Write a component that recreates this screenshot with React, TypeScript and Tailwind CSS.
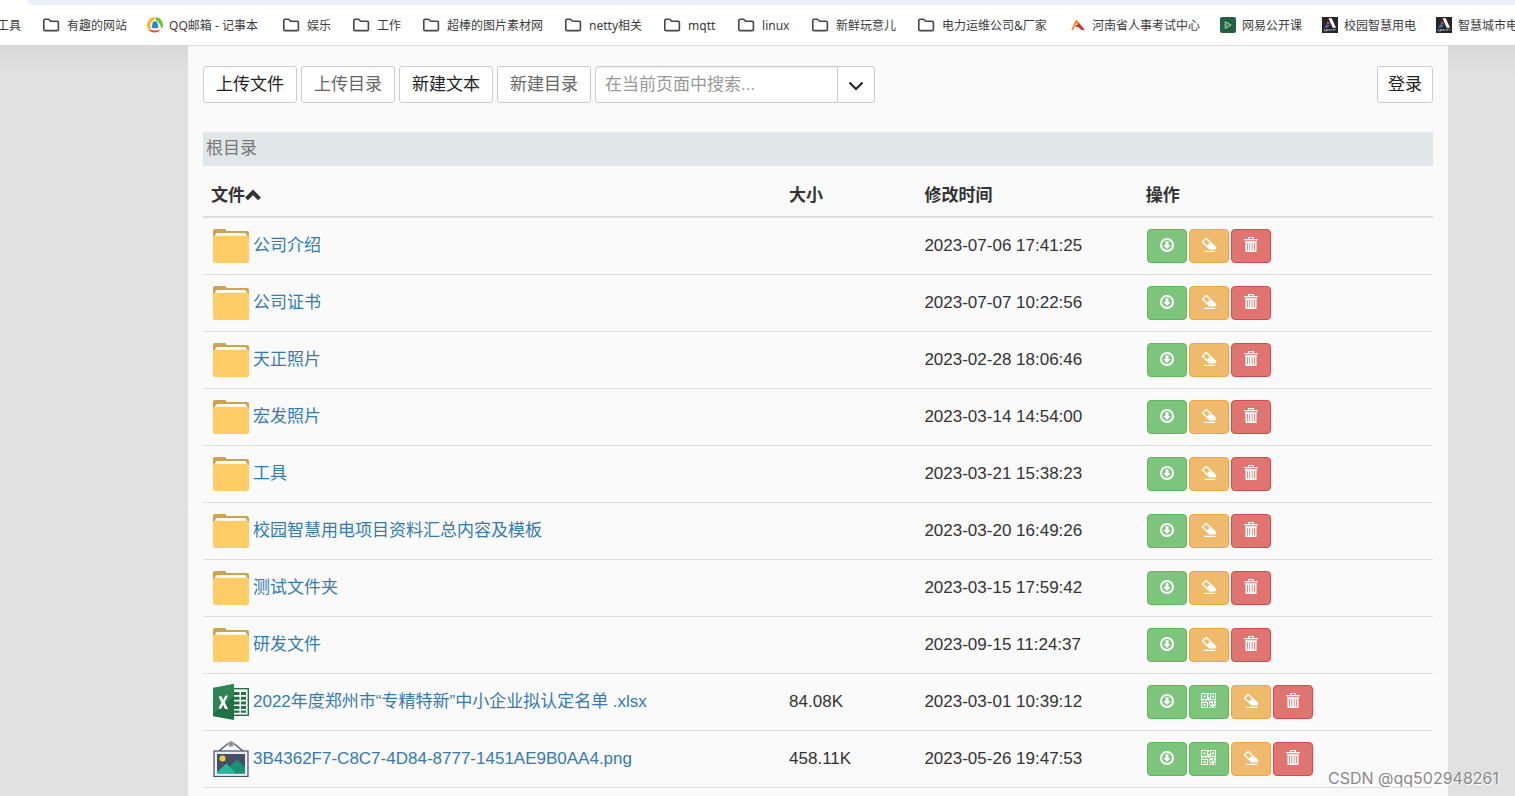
import type { ReactNode } from "react"
import clsx from "clsx"

type FileKind = "folder" | "excel" | "image"

type FileItem = {
    name: string
    kind: FileKind
    size?: string
    modified: string
}

type Bookmark = {
    label: string
    icon?: ReactNode
    width?: string
}

const files: FileItem[] = [
    { name: "公司介绍", kind: "folder", modified: "2023-07-06 17:41:25" },
    { name: "公司证书", kind: "folder", modified: "2023-07-07 10:22:56" },
    { name: "天正照片", kind: "folder", modified: "2023-02-28 18:06:46" },
    { name: "宏发照片", kind: "folder", modified: "2023-03-14 14:54:00" },
    { name: "工具", kind: "folder", modified: "2023-03-21 15:38:23" },
    { name: "校园智慧用电项目资料汇总内容及模板", kind: "folder", modified: "2023-03-20 16:49:26" },
    { name: "测试文件夹", kind: "folder", modified: "2023-03-15 17:59:42" },
    { name: "研发文件", kind: "folder", modified: "2023-09-15 11:24:37" },
    { name: "2022年度郑州市“专精特新”中小企业拟认定名单 .xlsx", kind: "excel", size: "84.08K", modified: "2023-03-01 10:39:12" },
    { name: "3B4362F7-C8C7-4D84-8777-1451AE9B0AA4.png", kind: "image", size: "458.11K", modified: "2023-05-26 19:47:53" },
]

function BookmarkFolderIcon() {
    return (
        <svg className="h-5 w-5 shrink-0" viewBox="0 0 20 20" fill="none" stroke="#474747" strokeWidth="1.6" strokeLinejoin="round">
            <path d="M2.8 5.4a1.2 1.2 0 0 1 1.2-1.2h3.6l2 2h6.6a1.2 1.2 0 0 1 1.2 1.2v7a1.2 1.2 0 0 1-1.2 1.2H4a1.2 1.2 0 0 1-1.2-1.2z" />
        </svg>
    )
}

function QQMailIcon() {
    return (
        <svg className="h-4 w-4 shrink-0" viewBox="0 0 16 16">
            <path d="M7.500 0A8 8 0 0 0 1.600 12.800L4 10.500A6 6 0 0 1 7.500 2.600z" fill="#fbb918" />
            <path d="M8.500 0a8 8 0 0 1 6.300 12C13.500 8 12 5 8.500 2.800z" fill="#6cc02b" />
            <path d="M2.200 12.200c3 1.400 7 1.600 11.300.6A8 8 0 0 1 2.200 13.400z" fill="#f0411c" />
            <path d="M8 4.200c1.800 0 2.800 1.400 2.800 3.200 0 1 .7 1.800.7 2.600 0 .9-1.600 1.200-3.500 1.200S4.800 11 4.800 10c0-.8.500-1.600.5-2.600C5.300 5.600 6.200 4.200 8 4.200z" fill="#1b8be0" />
        </svg>
    )
}

function ExamCenterIcon() {
    return (
        <svg className="h-4 w-4 shrink-0" viewBox="0 0 16 16">
            <path d="M1.200 13L5 4.200C5.600 2.800 7 2.600 7.800 4l2.400 4.500L8 8.200 6.200 6 3.400 13z" fill="#f4911e" />
            <path d="M5.500 8.500c2.500-1.800 5-.8 9 4.300h-2.700C9.500 10 7.500 9.300 5.500 9.800z" fill="#e32b35" />
            <path d="M8.500 5.200l6 7.600h-3.300L7.500 9z" fill="#e32b35" />
        </svg>
    )
}

function OpenCourseIcon() {
    return (
        <svg className="h-4 w-4 shrink-0" viewBox="0 0 16 16">
            <rect width="16" height="16" rx="2" fill="#23603f" />
            <path d="M5.200 4.500l6 3.500-6 3.500z" fill="#4a8465" stroke="#a9cbb9" strokeWidth="1" />
        </svg>
    )
}

function UnityIcon() {
    return (
        <svg className="h-4 w-4 shrink-0" viewBox="0 0 16 16">
            <rect width="16" height="16" fill="#25252a" />
            <path d="M6.500 1.200h3.200l4.300 9.600h-3.300z" fill="#fff" />
            <path d="M5.800 3.600L8 7 5.800 7.600 4.400 6.600z" fill="#d93a34" />
            <path d="M4 7.400l4 .7-2.300 2.500-3.400.3z" fill="#3d6fc0" />
            <path d="M2.500 12v2h2v-2M5.500 14v-2l2 2v-2M9 12v2M10.200 12.400h2M11.200 12v2M12.500 12l.8 1 .8-1" fill="none" stroke="#b9b9bd" strokeWidth=".7" />
        </svg>
    )
}

function FolderImage() {
    return (
        <svg className="h-9 w-9 shrink-0" viewBox="0 0 36 36">
            <path d="M0 3a2 2 0 0 1 2-2h10q1 0 1.500 2H34a2 2 0 0 1 2 2v6H0z" fill="#cda351" />
            <path d="M1.500 9l1-2.500Q3 5 4.500 5h27q1.500 0 2 1.500l1 2.500z" fill="#fff" />
            <path d="M0 9.500a2 2 0 0 1 2-1.700h32a2 2 0 0 1 2 1.700V33a2 2 0 0 1-2 2H2a2 2 0 0 1-2-2z" fill="#ffcc66" />
        </svg>
    )
}

function ExcelImage() {
    return (
        <svg className="h-9 w-9 shrink-0" viewBox="0 0 36 36">
            <rect x="18" y="4.700" width="17.300" height="26.600" fill="#fff" stroke="#207245" strokeWidth="1.400" />
            <path d="M21 8h5.500v3H21zM28 8h5v3h-5zM21 12.700h5.500v3H21zM28 12.700h5v3h-5zM21 17.400h5.500v3H21zM28 17.400h5v3h-5zM21 22h5.500v3H21zM28 22h5v3h-5zM21 26.600h5.500v2.200H21zM28 26.600h5v2.200h-5z" fill="#207245" />
            <path d="M0 4l21-4v36L0 32.200z" fill="#207245" />
            <path d="M0 4l21-4v12L0 30z" fill="#2f8456" />
            <path d="M5.500 12.500L8.500 12.200 10.200 16 12.200 11.800 15 11.500 11.700 18.300 15.200 25.200 12 25 10 20.700 8.200 24.700 5.300 24.500 8.500 18.400z" fill="#fff" />
        </svg>
    )
}

function PictureImage() {
    return (
        <svg className="h-9 w-9 shrink-0" viewBox="0 0 36 36">
            <path d="M6 10l9-7.500h6L30 10" fill="none" stroke="#434c6d" strokeWidth="1.200" />
            <circle cx="18" cy="3" r="2.900" fill="#a5a5a4" />
            <circle cx="18" cy="3" r="1.200" fill="#7d8286" />
            <rect x="1" y="10" width="34" height="25.500" fill="#e9eef6" stroke="#434c6d" strokeWidth="1.200" />
            <rect x="4" y="13" width="28" height="19.500" fill="#464f66" />
            <circle cx="9.500" cy="17.500" r="3" fill="#f6ca3e" />
            <path d="M16 26l8-7.500 8 8v6H16z" fill="#1a9172" />
            <path d="M4 31l9.500-8.500 9.500 10H4z" fill="#26b999" />
        </svg>
    )
}

function DownloadIcon() {
    return (
        <svg className="h-4 w-4" viewBox="0 0 16 16">
            <circle cx="8" cy="8" r="6" fill="none" stroke="#fff" strokeWidth="2" />
            <path d="M6.500 4.300h3V8h2.200L8 12 4.300 8h2.200z" fill="#fff" />
        </svg>
    )
}

function QrcodeIcon() {
    return (
        <svg className="h-4 w-4" viewBox="0 0 16 16" fill="#fff" fillRule="evenodd">
            <path d="M0 0h7v7H0zM1 1v5h5V1zM2.500 2.500h2v2h-2zM9 0h6v7H9zM10 1v5h4V1zM11 2.500h2v2h-2zM0 9h7v6H0zM1 10v4h5v-4zM2.500 11h2v2h-2z" />
            <path d="M7 0h1v2H7zM7 4h1.500v4H7zM0 7.300h2.500v1H0zM4 7.300h2v1H4zM9 8h3v2H9zM13 7.500h2v3h-2zM8 9h1v3H8zM10.500 10.500h2v2h-2zM9 12h1.500v1.500H9zM12.500 11.500H15v1.500h-2.500zM8 14h2v1H8zM11 13h2v2h-2zM14 14h1v1h-1z" />
        </svg>
    )
}

function EraserIcon() {
    return (
        <svg className="h-4 w-4" viewBox="0 0 16 16">
            <path d="M4.600 1Q5.200.500 5.800 1L15 9.800Q15.700 10.500 15.200 11.200L14 12.600H8.300L1 5.600Q.500 5 1 4.400z" fill="#fff" />
            <path d="M5.200 2.500L2.500 5 6 8.400 8.800 5.800z" fill="#f0ba6c" />
            <path d="M3 13.800h11.300V15H3z" fill="#fff" />
        </svg>
    )
}

function TrashIcon() {
    return (
        <svg className="h-4 w-4" viewBox="0 0 16 16" fill="#fff" fillRule="evenodd">
            <path d="M5 0h6v2h4v1.200H1V2h4zM6.300 1v1h3.400V1z" />
            <path d="M2 4.200h12v1.300h-.5V15h-11V5.500H2zM4 6v7.500h.8V6zM6.300 6v7.500h.8V6zM8.800 6v7.500h.8V6zM11.200 6v7.500h.8V6z" />
        </svg>
    )
}

const bookmarks: Bookmark[] = [
    { label: "有趣的网站" },
    { label: "QQ邮箱 - 记事本", icon: <QQMailIcon />, width: "min-w-[92px]" },
    { label: "娱乐" },
    { label: "工作" },
    { label: "超棒的图片素材网" },
    { label: "netty相关" },
    { label: "mqtt", width: "min-w-7" },
    { label: "linux", width: "min-w-7" },
    { label: "新鲜玩意儿" },
    { label: "电力运维公司&厂家", width: "min-w-[108px]" },
    { label: "河南省人事考试中心", icon: <ExamCenterIcon /> },
    { label: "网易公开课", icon: <OpenCourseIcon /> },
    { label: "校园智慧用电", icon: <UnityIcon /> },
    { label: "智慧城市电", icon: <UnityIcon /> },
]

function BookmarksBar() {
    return (
        <header className="overflow-hidden border-b border-[#dcdcdc] bg-white font-['Noto_Sans','Noto_Sans_CJK_SC',sans-serif] text-xs text-[#3c3c3c]">
            <div className="ml-[27px] h-[5px] rounded-bl-lg bg-[#ebeff9]" />
            <nav className="-ml-[3px] flex h-10 items-center gap-5 whitespace-nowrap">
                <a href="#" className="shrink-0 pt-px">工具</a>
                {bookmarks.map((bookmark) => (
                    <a key={bookmark.label} href="#" className="flex shrink-0 items-center gap-1.5">
                        {bookmark.icon ?? <BookmarkFolderIcon />}
                        <span className={clsx("pt-px", bookmark.width)}>{bookmark.label}</span>
                    </a>
                ))}
            </nav>
        </header>
    )
}

function ToolbarButton({ children, muted }: { children: ReactNode, muted?: boolean }) {
    return (
        <button className={clsx("h-[37px] rounded-[3px] border border-[#ccc] bg-white px-3", muted ? "text-[#666]" : "text-[#222]")}>
            {children}
        </button>
    )
}

function Toolbar() {
    return (
        <div className="flex items-center gap-1">
            <ToolbarButton>上传文件</ToolbarButton>
            <ToolbarButton muted>上传目录</ToolbarButton>
            <ToolbarButton>新建文本</ToolbarButton>
            <ToolbarButton muted>新建目录</ToolbarButton>
            <div className="flex h-[37px]">
                <input
                    type="text"
                    aria-label="搜索"
                    placeholder="在当前页面中搜索..."
                    className="w-[243px] rounded-l-[3px] border border-[#ccc] bg-white px-[9px] shadow-[inset_0_1px_1px_rgba(0,0,0,0.075)] placeholder:text-[#999]"
                />
                <button aria-label="更多" className="flex w-[37px] items-center justify-center rounded-r-[3px] border border-l-0 border-[#ccc] bg-white">
                    <svg className="h-4 w-4" viewBox="0 0 16 16" fill="none" stroke="#222" strokeWidth="2">
                        <path d="M1.500 5.500L8 12l6.500-6.500" />
                    </svg>
                </button>
            </div>
            <button className="ml-auto h-[37px] rounded-[3px] border border-[#ccc] bg-white px-2.5 text-[#222]">登录</button>
        </div>
    )
}

function ActionButton({ label, color, children }: { label: string, color: string, children: ReactNode }) {
    return (
        <button aria-label={label} className={clsx("flex h-[34px] w-10 items-center justify-center rounded border pb-0.5", color)}>
            {children}
        </button>
    )
}

function FileRow({ file }: { file: FileItem }) {
    return (
        <tr className="border-b border-[#ddd]">
            <td className="py-2.5 pl-2.5">
                <a href="#" className="flex items-center gap-1 text-[#337ab7]">
                    {file.kind === "folder" && <FolderImage />}
                    {file.kind === "excel" && <ExcelImage />}
                    {file.kind === "image" && <PictureImage />}
                    <span>{file.name}</span>
                </a>
            </td>
            <td className="px-2">{file.size}</td>
            <td className="px-2">{file.modified}</td>
            <td className="pl-[9px]">
                <div className="flex gap-0.5">
                    <ActionButton label="下载" color="border-[#5cb85c] bg-[#7dc57d]"><DownloadIcon /></ActionButton>
                    {file.kind !== "folder" && (
                        <ActionButton label="二维码" color="border-[#5cb85c] bg-[#7dc57d]"><QrcodeIcon /></ActionButton>
                    )}
                    <ActionButton label="重命名" color="border-[#f0a83c] bg-[#f0ba6c]"><EraserIcon /></ActionButton>
                    <ActionButton label="删除" color="border-[#d9484a] bg-[#e07471]"><TrashIcon /></ActionButton>
                </div>
            </td>
        </tr>
    )
}

function FileTable() {
    return (
        <table className="w-full table-fixed border-collapse text-left">
            <thead>
                <tr className="h-[51px] border-b-2 border-[#ddd]">
                    <th className="w-[47%] px-2 pt-2.5">
                        <span className="flex items-center">
                            文件
                            <svg className="h-4 w-4" viewBox="0 0 16 16" fill="none" stroke="#333" strokeWidth="4">
                                <path d="M1.500 10.800L8 4.300l6.500 6.500" />
                            </svg>
                        </span>
                    </th>
                    <th className="w-[11%] px-2 pt-2.5">大小</th>
                    <th className="w-[18%] px-2 pt-2.5">修改时间</th>
                    <th className="px-2 pt-2.5">操作</th>
                </tr>
            </thead>
            <tbody>
                {files.map((file) => <FileRow key={file.name} file={file} />)}
            </tbody>
        </table>
    )
}

export default function App() {
    return (
        <div className="relative flex h-screen flex-col overflow-hidden bg-[#e1e1e1] font-['Liberation_Sans','Noto_Sans_CJK_SC',sans-serif] text-[17px] leading-6 text-[#333]">
            <BookmarksBar />
            <div className="flex-1 bg-linear-to-b from-[#d9d9d9] to-[#e1e1e1] to-[30px] pr-[67px] pl-[188px]">
                <main className="h-full bg-[#fafafa] px-[15px] pt-5">
                    <Toolbar />
                    <div className="mt-[29px] bg-[#e1e6e9] px-[3px] py-[5px] text-[#777]">根目录</div>
                    <FileTable />
                </main>
            </div>
            <div className="absolute right-4 bottom-1.5 font-['Inter','Liberation_Sans',sans-serif] text-base text-[#8a8a8a] [text-shadow:1px_1px_0_#fff]">CSDN @qq502948261</div>
        </div>
    )
}
